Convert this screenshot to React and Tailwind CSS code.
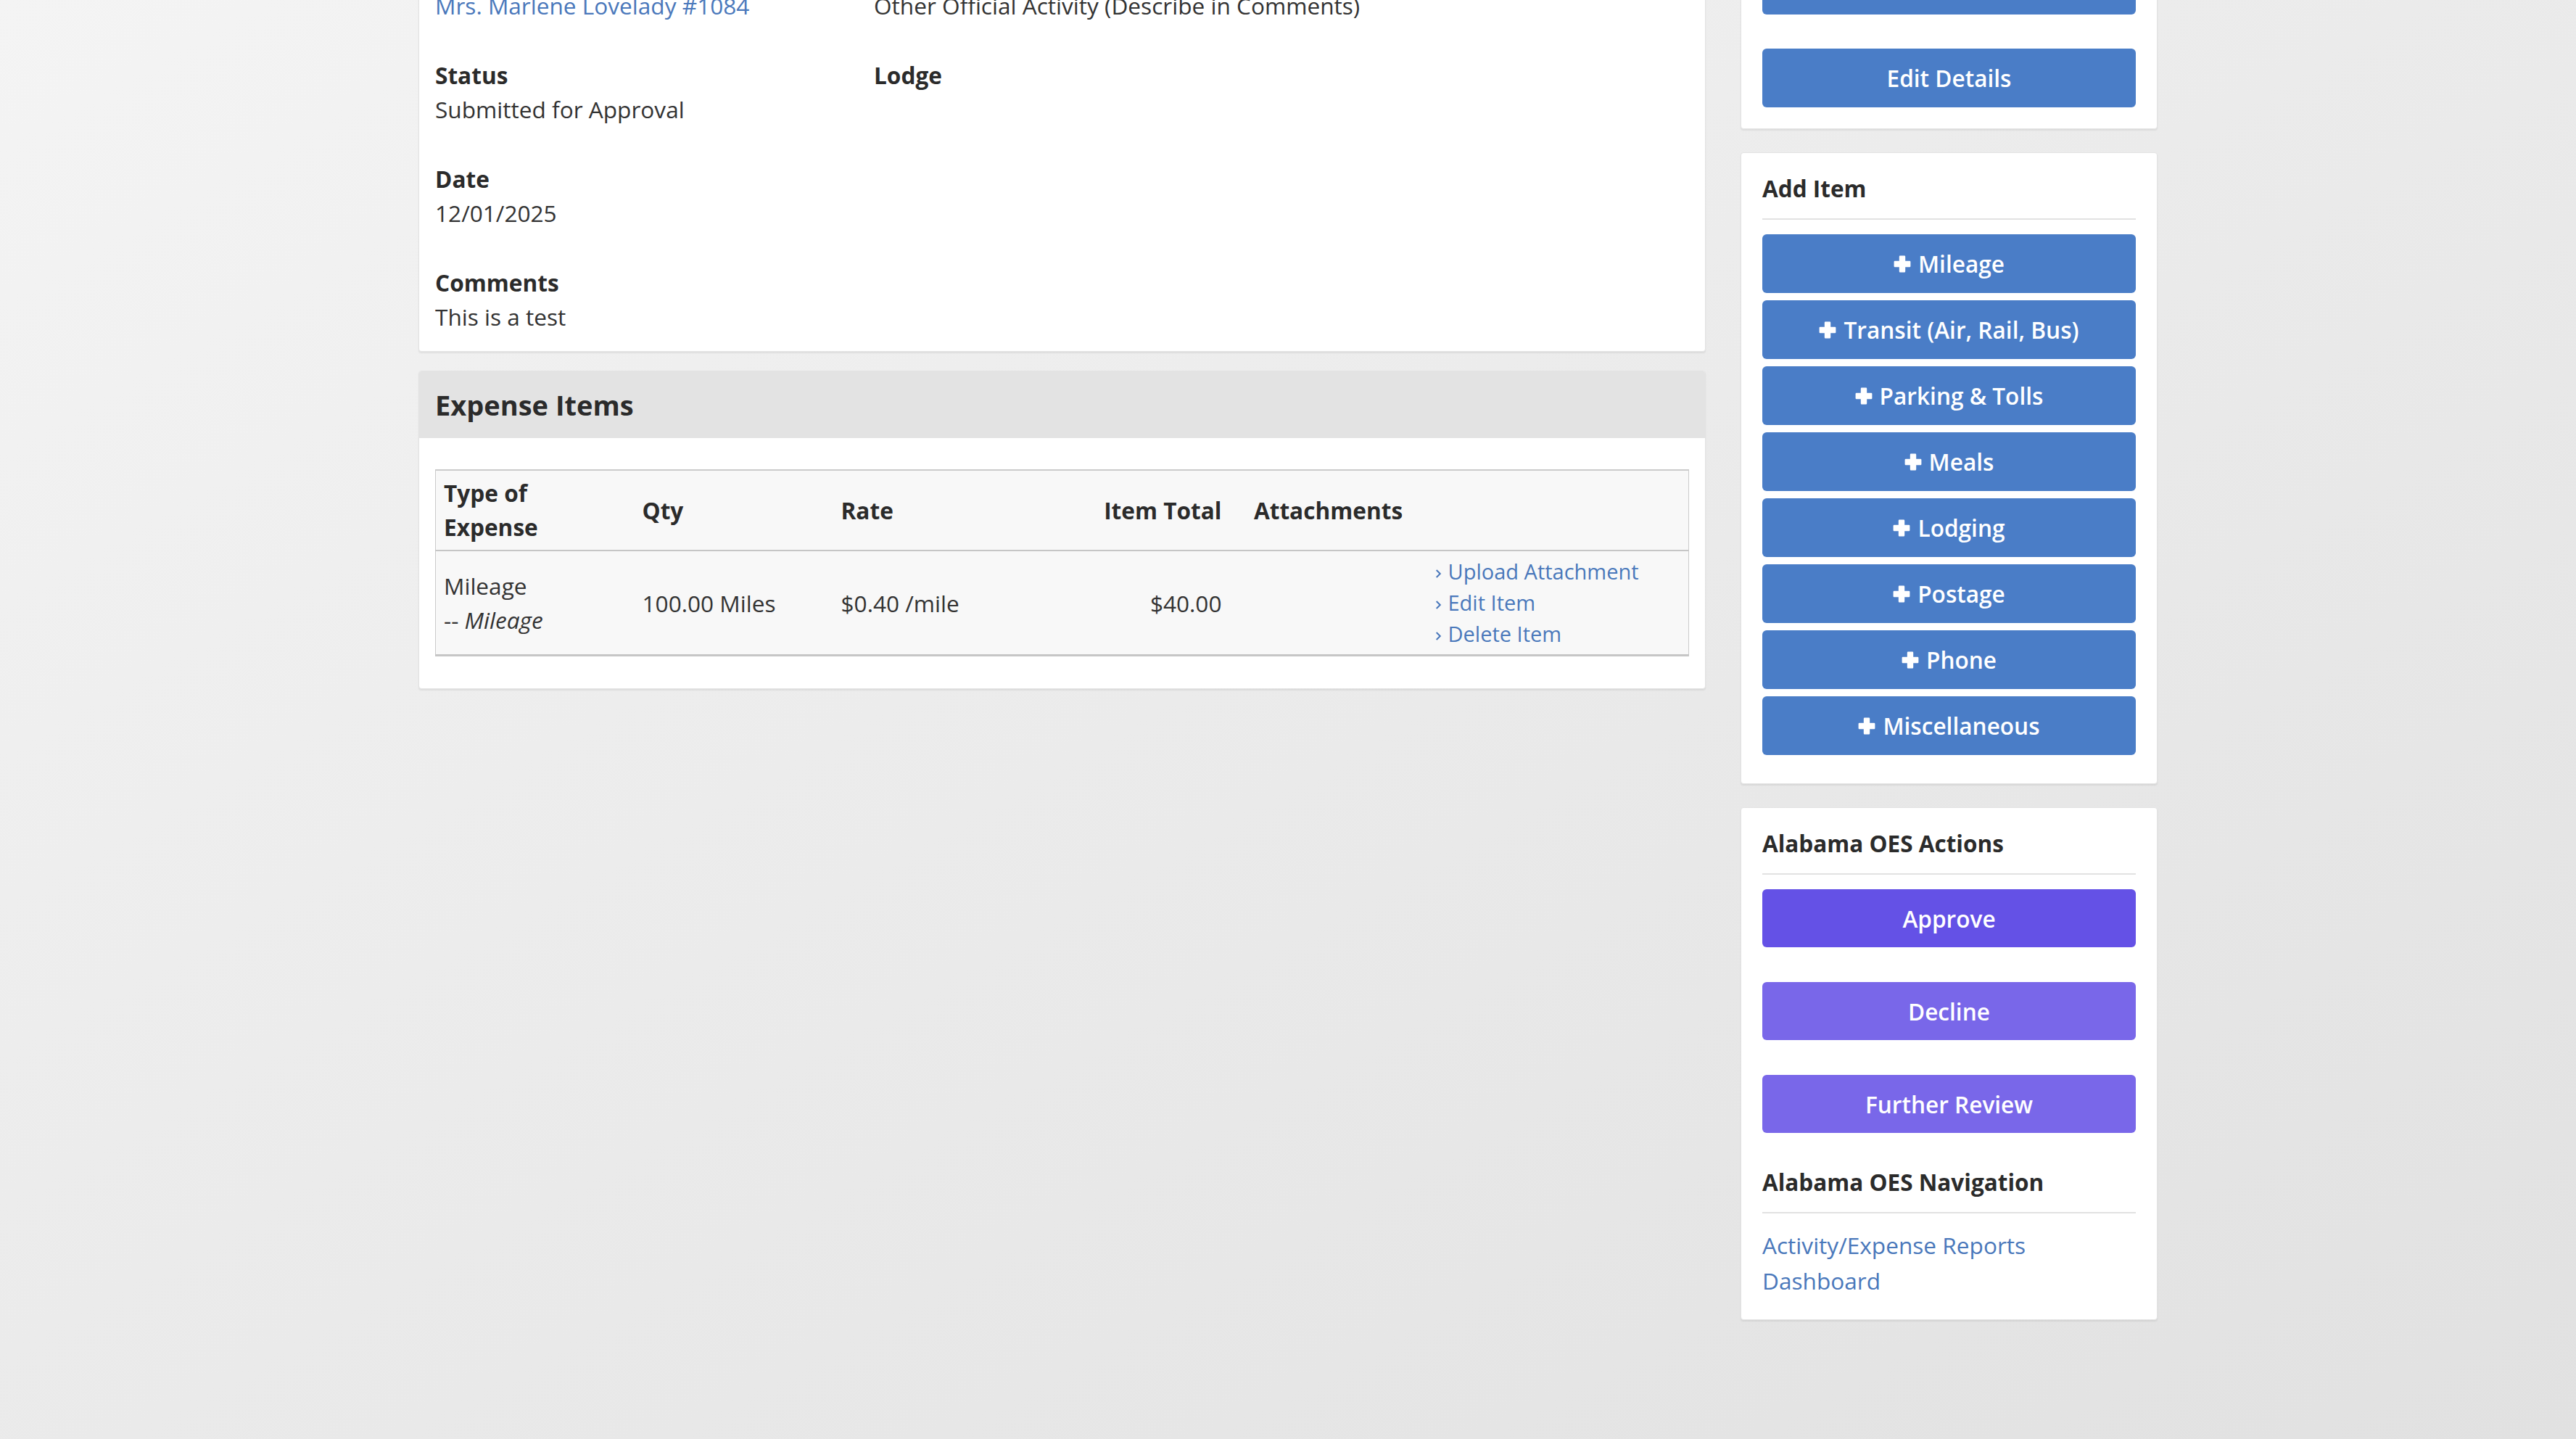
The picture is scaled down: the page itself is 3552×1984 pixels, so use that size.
import React from "react";

const addItems = [
  "Mileage",
  "Transit (Air, Rail, Bus)",
  "Parking & Tolls",
  "Meals",
  "Lodging",
  "Postage",
  "Phone",
  "Miscellaneous",
];

const PlusIcon = () => (
  <svg viewBox="0 0 20 20" className="w-[24px] h-[24px] mr-[10px] shrink-0" fill="currentColor">
    <path d="M7.5 0.5h5a1 1 0 0 1 1 1V6.5h5a1 1 0 0 1 1 1v5a1 1 0 0 1-1 1h-5v5a1 1 0 0 1-1 1h-5a1 1 0 0 1-1-1v-5h-5a1 1 0 0 1-1-1v-5a1 1 0 0 1 1-1h5v-5a1 1 0 0 1 1-1z" />
  </svg>
);

const Chevron = () => (
  <svg viewBox="0 0 8 12" className="inline-block align-middle w-[9px] h-[14px] mr-[9px]" fill="none" stroke="currentColor" strokeWidth="1.8">
    <polyline points="1.5,1.5 6,6 1.5,10.5" />
  </svg>
);

const Field = ({ label, children }) => (
  <div>
    <div className="font-bold text-[#2b2b2b]">{label}</div>
    {children && <div>{children}</div>}
  </div>
);

const Card = ({ className = "", children }) => (
  <div className={`bg-white border border-[#e3e3e3] rounded-[4px] shadow-[0_2px_2px_rgba(0,0,0,0.07)] ${className}`}>
    {children}
  </div>
);

const SideHeading = ({ children }) => (
  <h3 className="text-[31.5px] leading-[40px] font-bold text-[#2b2b2b] pb-[21px] border-b-2 border-[#e2e2e2] mb-[20px]">
    {children}
  </h3>
);

const BlueButton = ({ children, className = "" }) => (
  <button className={`w-full h-[81px] rounded-[6px] bg-[#4a7dc7] text-white font-semibold flex items-center justify-center ${className}`}>
    {children}
  </button>
);

const PurpleButton = ({ children, tone }) => (
  <button
    className={`w-full h-[80px] rounded-[6px] text-white font-semibold flex items-center justify-center mb-[48px] ${
      tone === "dark" ? "bg-[#6451e6]" : "bg-[#7967e9]"
    }`}
  >
    {children}
  </button>
);

export default function App() {
  return (
    <div className="min-h-screen overflow-hidden bg-linear-to-br from-[#f4f4f4] to-[#e1e1e1] font-['Open_Sans','Liberation_Sans',sans-serif] text-[31.6px] leading-[47px] text-[#333]">
      <div className="w-[2398px] mx-auto flex items-start gap-[48px]">
        {/* report details + expense table */}
        <div className="flex-1 -mt-[86px]">
          <Card className="px-[22px] pt-[22px] pb-[24px] grid grid-cols-[605px_1fr] gap-y-[49px]">
            <Field label="Member">
              <a className="text-[#4a78bb]">Mrs. Marlene Lovelady #1084</a>
            </Field>
            <Field label="Activity">Other Official Activity (Describe in Comments)</Field>
            <Field label="Status">Submitted for Approval</Field>
            <Field label="Lodge" />
            <Field label="Date">12/01/2025</Field>
            <div />
            <Field label="Comments">This is a test</Field>
            <div />
          </Card>

          <Card className="mt-[26px] overflow-hidden">
            <div className="h-[92px] bg-[#e3e3e3] px-[22px] flex items-center">
              <h2 className="text-[38px] leading-[52px] font-bold text-[#2b2b2b]">Expense Items</h2>
            </div>
            <div className="px-[22px] pt-[43px] pb-[44px]">
              <table className="w-full table-fixed bg-[#f8f8f8] border-x border-t-2 border-[#cbcbcb]">
                <colgroup>
                  <col className="w-[274px]" />
                  <col className="w-[274px]" />
                  <col className="w-[274px]" />
                  <col className="w-[273px]" />
                  <col className="w-[272px]" />
                  <col />
                </colgroup>
                <thead>
                  <tr className="border-b-2 border-[#c6c6c6] font-bold text-[#2b2b2b]">
                    <th className="px-[11px] pt-[7px] pb-[8px] text-left align-middle">
                      Type of
                      <br />
                      Expense
                    </th>
                    <th className="px-[11px] text-left align-middle">Qty</th>
                    <th className="px-[11px] text-left align-middle">Rate</th>
                    <th className="px-[11px] text-right align-middle">Item Total</th>
                    <th className="px-[11px] text-center align-middle">Attachments</th>
                    <th />
                  </tr>
                </thead>
                <tbody>
                  <tr className="border-b-[3px] border-[#c6c6c6]">
                    <td className="px-[11px] align-middle">
                      Mileage
                      <br />
                      -- <em>Mileage</em>
                    </td>
                    <td className="px-[11px] align-middle">100.00 Miles</td>
                    <td className="px-[11px] align-middle">$0.40 /mile</td>
                    <td className="px-[11px] text-right align-middle">$40.00</td>
                    <td />
                    <td className="px-[11px] pt-[6px] pb-[7px] text-[29px] leading-[43px] text-[#4a78bb]">
                      <div><Chevron />Upload Attachment</div>
                      <div><Chevron />Edit Item</div>
                      <div><Chevron />Delete Item</div>
                    </td>
                  </tr>
                </tbody>
              </table>
            </div>
          </Card>
        </div>

        {/* sidebar */}
        <div className="w-[575px] shrink-0 -mt-[91px] flex flex-col gap-[32px]">
          <Card className="p-[29px]">
            <BlueButton className="mb-[47px]">Print Report</BlueButton>
            <BlueButton>Edit Details</BlueButton>
          </Card>

          <Card className="p-[29px]">
            <SideHeading>Add Item</SideHeading>
            {addItems.map((item) => (
              <BlueButton key={item} className="mb-[10px]">
                <PlusIcon />
                {item}
              </BlueButton>
            ))}
          </Card>

          <Card className="p-[29px]">
            <SideHeading>Alabama OES Actions</SideHeading>
            <PurpleButton tone="dark">Approve</PurpleButton>
            <PurpleButton>Decline</PurpleButton>
            <PurpleButton>Further Review</PurpleButton>
            <SideHeading>Alabama OES Navigation</SideHeading>
            <div className="leading-[48.5px] text-[#4a78bb]">
              <a className="block">Activity/Expense Reports</a>
              <a className="block">Dashboard</a>
            </div>
          </Card>
        </div>
      </div>
    </div>
  );
}
